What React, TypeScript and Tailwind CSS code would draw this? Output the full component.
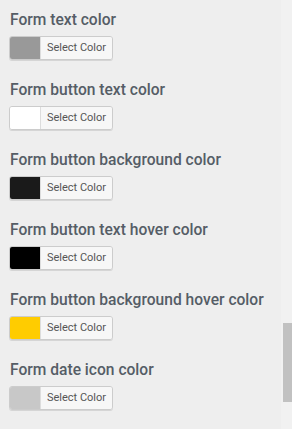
import React from "react";

const items: { label: string; color: string }[] = [
  { label: "Form text color", color: "#999999" },
  { label: "Form button text color", color: "#ffffff" },
  { label: "Form button background color", color: "#1a1a1a" },
  { label: "Form button text hover color", color: "#000000" },
  { label: "Form button background hover color", color: "#ffcc00" },
  { label: "Form date icon color", color: "#c8c8c8" },
];

export default function App() {
  return (
    <div
      className="flex h-[429px] w-[292px] overflow-hidden bg-[#eeeeee]"
      style={{ fontFamily: "Roboto, 'Liberation Sans', sans-serif" }}
    >
      <div className="flex-1 pl-[9px]">
        {items.map((it) => (
          <div key={it.label} className="pt-[10px] pb-[10px]">
            <div className="h-[20px] pl-[1px] text-[15.6px] leading-[20px] font-medium text-[#555d66] whitespace-nowrap">
              {it.label}
            </div>
            <div className="mt-[6px] flex h-[24px] w-[104px] overflow-hidden rounded-[3px] border border-[#cccccc] shadow-[0_1px_0_#d5d5d5]">
              <div className="w-[30px] shrink-0" style={{ backgroundColor: it.color }} />
              <div className="flex flex-1 items-center justify-center border-l border-[#dddddd] bg-[#f7f7f7] text-[11px] text-[#555555]">
                Select Color
              </div>
            </div>
          </div>
        ))}
      </div>
      <div className="flex w-[11px] flex-col bg-[#f1f1f1] pl-[2px]">
        <div className="h-[323px]" />
        <div className="h-[79px] bg-[#c1c1c1]" />
      </div>
    </div>
  );
}
